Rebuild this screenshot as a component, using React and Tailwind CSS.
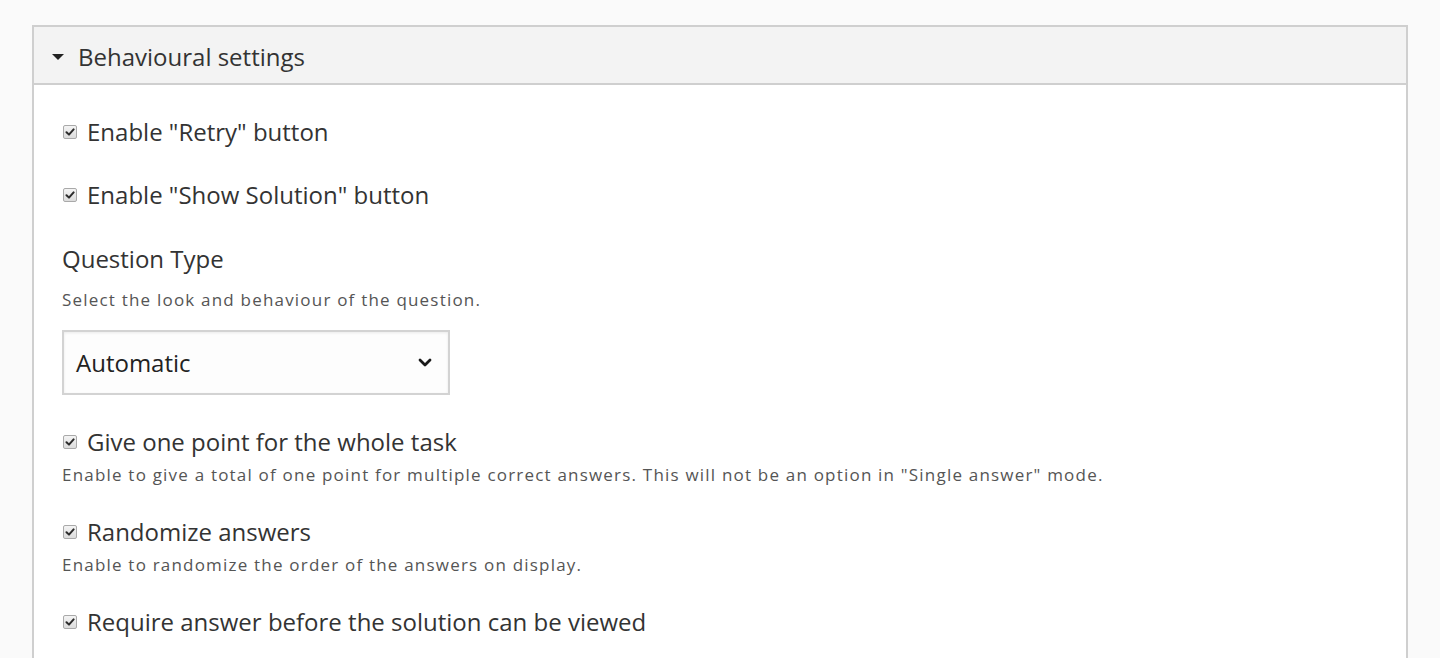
import React from "react";

function Check() {
  return (
    <span className="inline-flex h-[14px] w-[14px] shrink-0 items-center justify-center rounded-[2px] border border-[#a9a9a9] bg-gradient-to-b from-[#f4f4f4] to-[#dcdcdc]">
      <svg viewBox="0 0 10 10" className="h-[10px] w-[10px]">
        <path d="M1.5 5.2 L4 7.6 L8.6 2.4" fill="none" stroke="#2b2b2b" strokeWidth="2" strokeLinecap="round" strokeLinejoin="round" />
      </svg>
    </span>
  );
}

function CheckRow({ label, desc }) {
  return (
    <div>
      <label className="flex items-center gap-[10px] pl-px text-[24px] leading-[32px] text-[#333]">
        <Check />
        <span>{label}</span>
      </label>
      {desc && (
        <div className="mt-[5px] text-[17px] leading-[24px] tracking-[1.2px] text-[#555]">{desc}</div>
      )}
    </div>
  );
}

export default function App() {
  return (
    <div className="min-h-[658px] bg-[#fafafa] px-8 pt-[25px]" style={{ fontFamily: '"Open Sans", sans-serif' }}>
      <div className="w-[1376px] border-2 border-b-0 border-[#cfcfcf] bg-white">
        {/* header */}
        <div className="flex h-[58px] items-center gap-[14px] border-b-2 border-[#cfcfcf] bg-[#f3f3f3] pl-[18px] pt-[3px]">
          <svg viewBox="0 0 12 6" className="h-[6px] w-[12px]">
            <path d="M0 0 L12 0 L6 6 Z" fill="#222" />
          </svg>
          <span className="text-[24px] text-[#333]">Behavioural settings</span>
        </div>

        {/* body */}
        <div className="px-[28px] pt-[31px] pb-6">
          <div className="flex flex-col gap-[31px]">
            <CheckRow label={'Enable "Retry" button'} />
            <CheckRow label={'Enable "Show Solution" button'} />
          </div>

          <div className="mt-[32px]">
            <div className="text-[24px] leading-[32px] text-[#333]">Question Type</div>
            <div className="mt-[13px] text-[17px] leading-[24px] tracking-[1.2px] text-[#555]">
              Select the look and behaviour of the question.
            </div>
            <div className="mt-[18px] flex h-[65px] w-[388px] items-center justify-between border-2 border-[#d3d3d3] bg-[#fdfdfd] pl-[12px] pr-[16px] shadow-[inset_0_1px_3px_rgba(0,0,0,0.08)]">
              <span className="text-[24px] text-[#222]">Automatic</span>
              <svg viewBox="0 0 14 9" className="h-[9px] w-[14px]">
                <path d="M2 2 L7 7 L12 2" fill="none" stroke="#1a1a1a" strokeWidth="2.8" strokeLinecap="round" strokeLinejoin="round" />
              </svg>
            </div>
          </div>

          <div className="mt-[31px] flex flex-col gap-[29px]">
            <CheckRow
              label="Give one point for the whole task"
              desc={'Enable to give a total of one point for multiple correct answers. This will not be an option in "Single answer" mode.'}
            />
            <CheckRow
              label="Randomize answers"
              desc="Enable to randomize the order of the answers on display."
            />
            <CheckRow label="Require answer before the solution can be viewed" />
          </div>
        </div>
      </div>
    </div>
  );
}
